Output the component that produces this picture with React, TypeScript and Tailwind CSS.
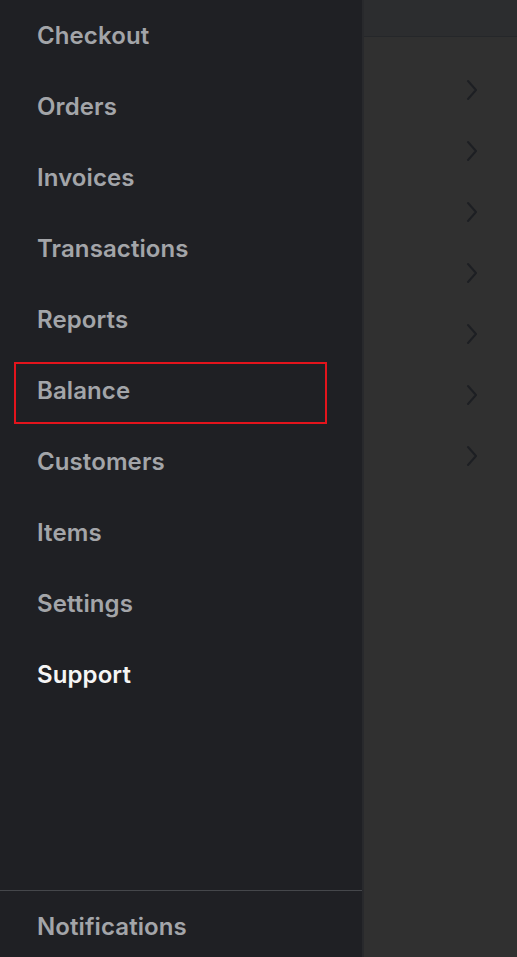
import React from "react";

const items = [
  "Checkout",
  "Orders",
  "Invoices",
  "Transactions",
  "Reports",
  "Balance",
  "Customers",
  "Items",
  "Settings",
  "Support",
];

function Chevron() {
  return (
    <svg width="14" height="22" viewBox="0 0 14 22" fill="none">
      <path d="M3 2 L11 11 L3 20" stroke="#1d1f23" strokeWidth="2" strokeLinecap="round" strokeLinejoin="round" />
    </svg>
  );
}

export default function App() {
  return (
    <div
      className="flex h-[957px] w-[517px] overflow-hidden"
      style={{ fontFamily: "Inter, 'Noto Sans', sans-serif" }}
    >
      <aside className="flex w-[362px] shrink-0 flex-col bg-[#1f2024]">
        <nav className="flex flex-col">
          {items.map((label) => (
            <div key={label} className="relative flex h-[71px] items-center pl-[37px]">
              <span
                className={
                  "text-[24px] font-semibold tracking-[0.1px] " +
                  (label === "Support" ? "text-[#f5f5f5]" : "text-[#a3a5a9]")
                }
              >
                {label}
              </span>
              {label === "Balance" && (
                <div className="absolute left-[14px] top-[7px] h-[62px] w-[313px] border-2 border-[#e3141c]" />
              )}
            </div>
          ))}
        </nav>
        <div className="flex-1" />
        <div className="border-t border-[#45474b]">
          <div className="flex h-[66px] items-center pl-[37px] pt-[6px]">
            <span className="text-[24px] font-semibold tracking-[0.1px] text-[#a3a5a9]">Notifications</span>
          </div>
        </div>
      </aside>
      <main className="flex flex-1 flex-col border-l-2 border-[#28292c] bg-[#303030]">
        <div className="h-[37px] border-b border-[#25272a] bg-[#2c2d2f]" />
        <div className="flex flex-col pt-[22px]">
          {Array.from({ length: 7 }).map((_, i) => (
            <div key={i} className="flex h-[61px] items-center justify-end pr-[38px]">
              <Chevron />
            </div>
          ))}
        </div>
      </main>
    </div>
  );
}
